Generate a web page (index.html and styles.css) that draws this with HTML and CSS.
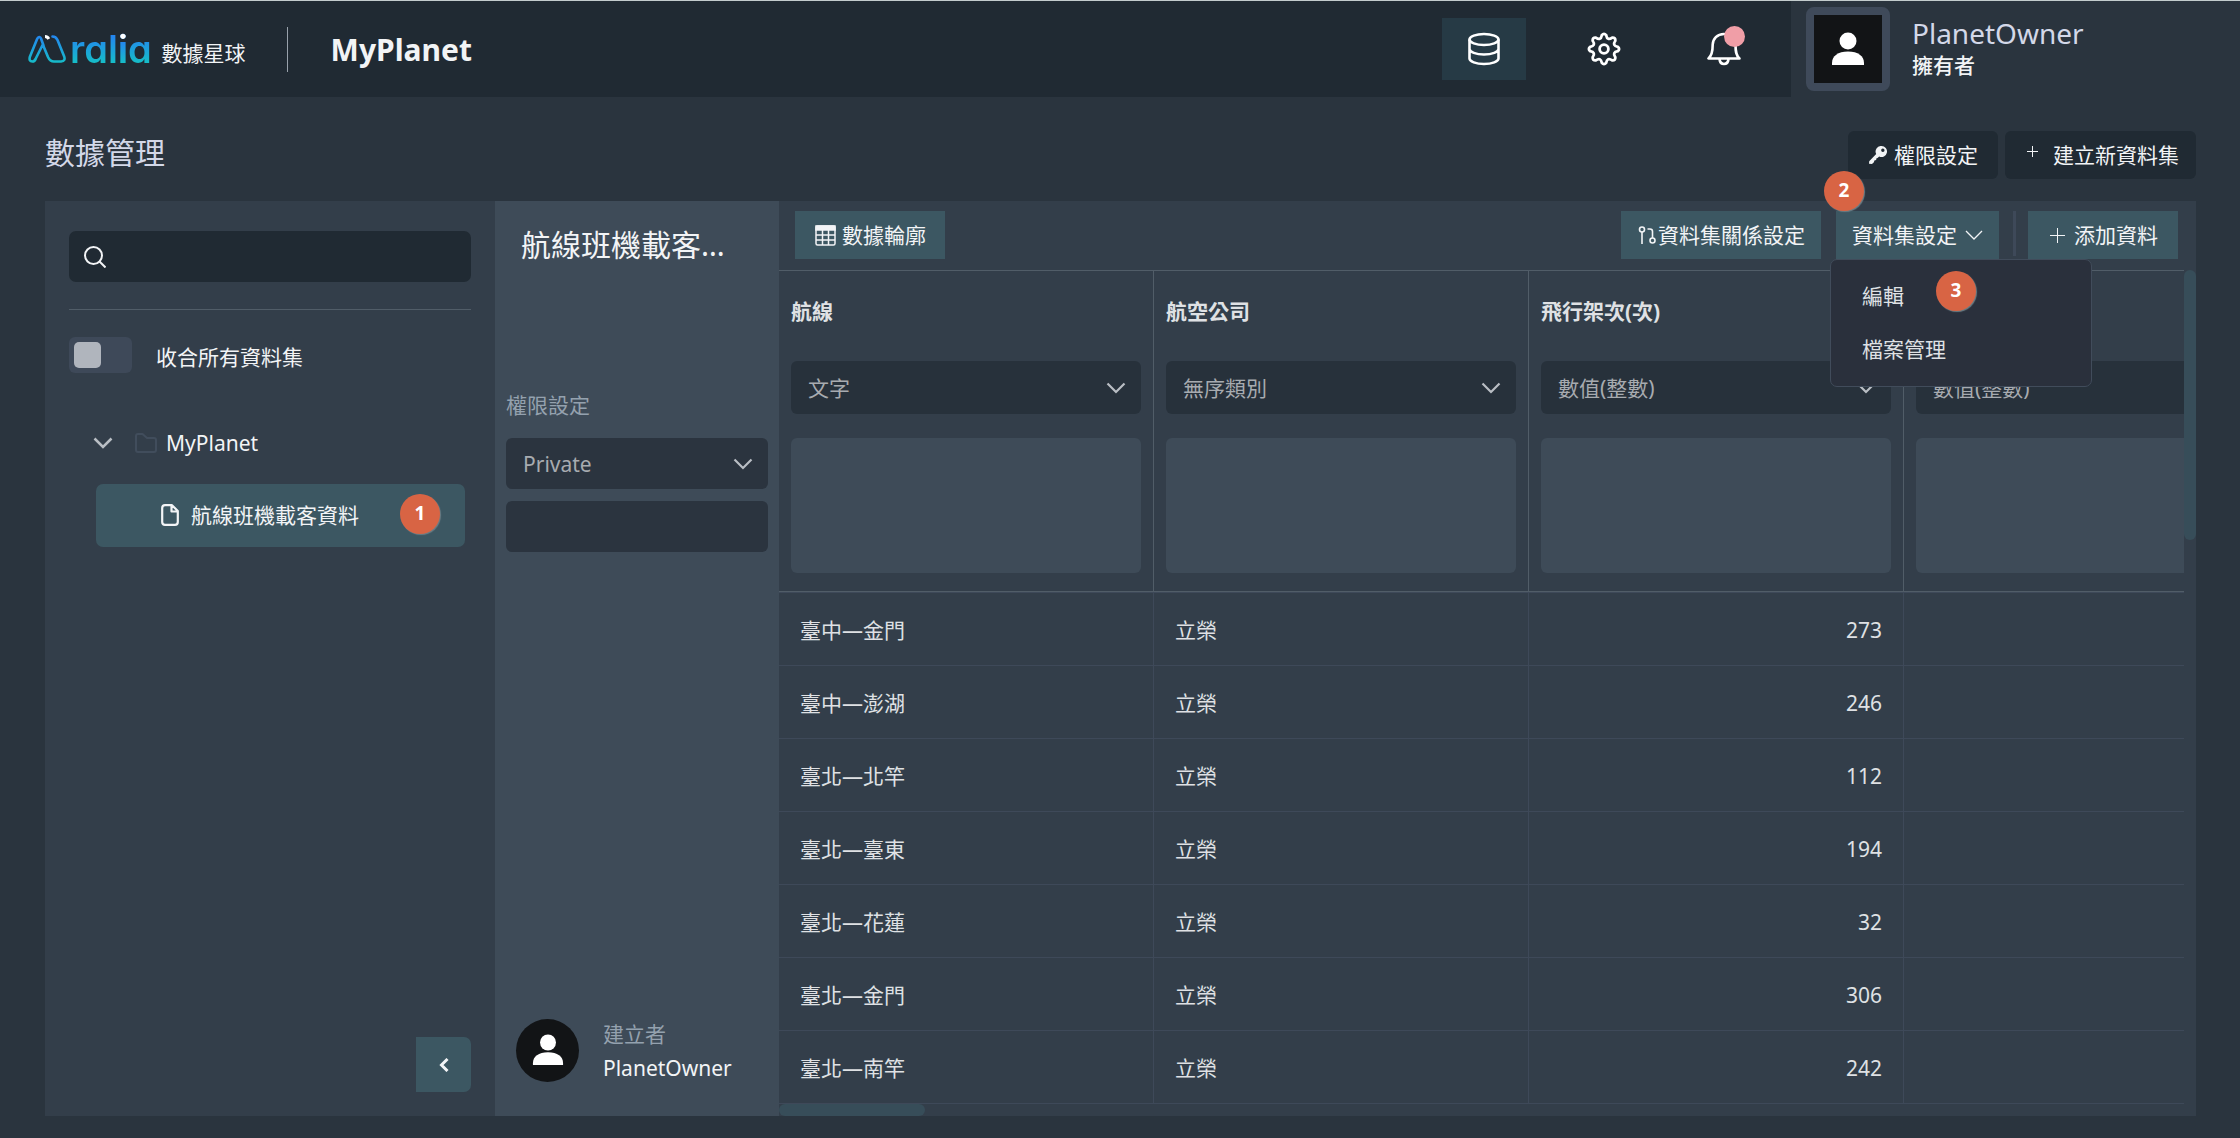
FILE: index.html
```html
<!DOCTYPE html>
<html lang="zh-Hant">
<head>
<meta charset="utf-8">
<meta name="viewport" content="width=device-width, initial-scale=1">
<title>Aralia 數據星球 - 數據管理</title>
<link rel="stylesheet" href="styles.css">
</head>
<body>
<header class="topbar">
  <a class="logo" href="#" aria-label="Aralia 數據星球">
    <svg class="logo-mark" viewBox="0 0 38 28" width="38" height="28" fill="none" stroke-width="2.600" stroke-linecap="round" stroke-linejoin="round" aria-hidden="true">
      <defs><linearGradient id="brand" gradientUnits="userSpaceOnUse" x1="0" y1="0" x2="0" y2="28"><stop offset="0" stop-color="#2485f0"/><stop offset="1" stop-color="#16bcc8"/></linearGradient></defs>
      <path stroke="url(#brand)" d="M15.500 10.500 13 3.500Q12 1.300 10.200 2.500 9.500 3 9 4.300L1.800 22Q.8 26.500 4.300 26.500 6.800 26.500 7.800 23.500L14.800 9.500 20 22Q22 26.500 26 26.500H33Q38 26 36 21L29.500 5Q28 1.500 24.500 1.500"/>
      <path stroke="#fff" stroke-width="3" stroke-linecap="butt" d="M17 1.500Q19.500 1.500 20.800 4"/>
    </svg>
    <span class="logo-word">ral<span class="logo-i">i</span>a</span>
    <span class="logo-sub">數據星球</span>
  </a>
  <h1 class="planet">MyPlanet</h1>
  <nav class="tools">
    <button class="tool active" type="button" aria-label="數據管理">
      <svg class="icon-lg" viewBox="0 0 34 34" fill="none" stroke="currentColor" stroke-width="2.600"><ellipse cx="17" cy="7.500" rx="14.500" ry="5.500"/><path d="M2.500 7.500v19c0 3 6.500 5.500 14.500 5.500s14.500-2.500 14.500-5.500v-19M2.500 17c0 3 6.500 5.500 14.500 5.500S31.500 20 31.500 17"/></svg>
    </button>
    <button class="tool" type="button" aria-label="設定">
      <svg class="icon-lg" viewBox="-17 -17 34 34" fill="none" stroke="currentColor" stroke-width="2.800" stroke-linejoin="round"><circle r="4.400"/><path d="M13.830-2.190Q16.400 0 13.830 2.190 7.850 3.250 11.330 8.230 11.600 11.600 8.230 11.330 3.250 7.850 2.190 13.830 0 16.400-2.190 13.830-3.250 7.850-8.230 11.330-11.600 11.600-11.330 8.230-7.850 3.250-13.830 2.190-16.400 0-13.830-2.190-7.850-3.250-11.330-8.230-11.600-11.600-8.230-11.330-3.250-7.850-2.190-13.830 0-16.400 2.190-13.830 3.250-7.850 8.230-11.330 11.600-11.600 11.330-8.230 7.850-3.250 13.830-2.190Z"/></svg>
    </button>
    <button class="tool" type="button" aria-label="通知">
      <svg class="icon-lg" viewBox="0 0 34 34" fill="none" stroke="currentColor" stroke-width="2.600" stroke-linecap="round" stroke-linejoin="round"><path d="M1.500 26.500h31c-3.500-3-4-7-4-14A11.500 11.500 0 0 0 17 2C10 2 6 7 5.700 12.500c0 7-.7 11-4.200 14zM12.500 27c.3 3 2 5 4.500 5s4.200-2 4.500-5"/></svg>
      <span class="dot"></span>
    </button>
  </nav>
  <div class="account">
    <span class="account-avatar"><svg viewBox="0 0 34 34" width="34" height="34" fill="#fff"><circle cx="17" cy="9" r="8.500"/><path d="M1 33v-2c0-7 6-11.500 16-11.500S33 24 33 31v2z"/></svg></span>
    <div class="account-text"><span class="account-name">PlanetOwner</span><span class="account-role">擁有者</span></div>
  </div>
</header>

<div class="titlebar">
  <h2 class="page-title">數據管理</h2>
  <div class="title-actions">
    <button class="btn-dark" type="button"><svg class="key" viewBox="0 0 18 18" width="18" height="18"><path fill="currentColor" fill-rule="evenodd" d="M12.500 0a5.500 5.500 0 1 1-2.300 10.500L8.500 12l-1 .3-.4 1.700-1.700.4-.5 1.800L3 18 0 17.800l.2-2.500L7.200 8A5.500 5.500 0 0 1 12.500 0zm1.300 2.500a1.700 1.700 0 1 0 .1 3.400 1.700 1.700 0 0 0-.1-3.400z"/></svg>權限設定</button>
    <button class="btn-dark btn-new" type="button"><svg class="plus-sm" viewBox="0 0 11 11" width="11" height="11" stroke="currentColor" stroke-width="1"><path d="M5.500 0v11M0 5.500h11"/></svg>建立新資料集</button>
  </div>
</div>

<main class="panel">
  <aside class="sidebar">
    <label class="search">
      <svg viewBox="0 0 22 22" width="22" height="22" fill="none" stroke="currentColor" stroke-width="2"><circle cx="9.500" cy="9.500" r="8.500"/><path d="m15.500 15.500 6 6"/></svg>
      <input type="search" aria-label="搜尋">
    </label>
    <label class="collapse-all"><input class="switch" type="checkbox" role="switch"><span class="switch-text">收合所有資料集</span></label>
    <div class="tree">
      <button class="tree-parent" type="button">
        <svg class="chev" viewBox="0 0 20 12" width="20" height="12" fill="none" stroke="#b9bec4" stroke-width="2.500"><path d="m1.500 1.500 8.500 8.500 8.500-8.500"/></svg>
        <svg class="folder" viewBox="0 0 22 20" width="22" height="20" fill="none" stroke="#414d5c" stroke-width="2" stroke-linejoin="round"><path d="M3 1h4.500L12 5h7q2 0 2 2v10q0 2-2 2H3q-2 0-2-2V3q0-2 2-2z"/></svg>
        MyPlanet</button>
      <a class="tree-item" href="#">
        <svg viewBox="0 0 18 22" width="18" height="22" fill="none" stroke="currentColor" stroke-width="2.200" stroke-linejoin="round"><path d="M4 1.200h7L16.800 7v11q0 2.800-2.800 2.800H4q-2.800 0-2.800-2.800V4Q1.200 1.200 4 1.200zM10.500 1.500V7.500h6"/></svg>
        航線班機載客資料
        <span class="badge badge-item">1</span></a>
    </div>
    <button class="collapse" type="button" aria-label="收合側欄"><svg viewBox="0 0 10 14" width="10" height="14" fill="none" stroke="currentColor" stroke-width="3"><path d="M8.500 1 2.500 7l6 6"/></svg></button>
  </aside>

  <section class="meta">
    <h3 class="meta-title">航線班機載客資料</h3>
    <label class="meta-label" for="perm">權限設定</label>
    <select class="select meta-field" id="perm"><option>Private</option></select>
    <input class="meta-field meta-input" type="text" aria-label="權限成員">
    <div class="creator">
      <span class="creator-avatar"><svg viewBox="0 0 34 34" width="32" height="34" fill="#fff"><circle cx="17" cy="9" r="8.500"/><path d="M1 33v-2c0-7 6-11.500 16-11.500S33 24 33 31v2z"/></svg></span>
      <div class="creator-text"><span class="creator-label">建立者</span><span>PlanetOwner</span></div>
    </div>
  </section>

  <section class="data">
    <div class="toolbar">
      <button class="btn-teal btn-profile" type="button"><svg viewBox="0 0 21 21" width="21" height="21" fill="none" stroke="currentColor" stroke-width="1.500"><rect x="1" y="1" width="19" height="19" rx="1.500"/><path fill="currentColor" d="M1 1h19v4H1z"/><path d="M1 10h19M1 15h19M7.500 5v15M13.500 5v15"/></svg>數據輪廓</button>
      <div class="toolbar-right">
        <button class="btn-teal btn-relation" type="button"><svg viewBox="0 0 18 18" width="18" height="18" fill="none" stroke="currentColor" stroke-width="1.600"><circle cx="4" cy="3.500" r="2.500"/><path d="M4 6v12M9.500 3H12q2.500 0 2.500 2.500V12"/><circle cx="14.500" cy="14.500" r="2.500"/></svg>資料集關係設定</button>
        <div class="menu-wrap">
          <button class="btn-teal btn-settings" type="button" aria-expanded="true">資料集設定<svg viewBox="0 0 18 10" width="18" height="10" fill="none" stroke="currentColor" stroke-width="1.300"><path d="m1 1 8 8 8-8"/></svg></button>
          <div class="menu">
            <button class="menu-item" type="button">編輯</button>
            <button class="menu-item" type="button">檔案管理</button>
            <span class="badge badge-edit">3</span>
          </div>
          <span class="badge badge-settings">2</span>
        </div>
        <span class="divider"></span>
        <button class="btn-teal btn-add" type="button"><svg viewBox="0 0 15 15" width="15" height="15" stroke="currentColor" stroke-width="1"><path d="M7.500 0v15M0 7.500h15"/></svg>添加資料</button>
      </div>
    </div>
    <div class="grid-area">
      <div class="grid-view">
        <table class="grid">
          <thead>
            <tr>
              <th><div class="col-name">航線</div><select class="select" aria-label="航線 類型"><option>文字</option></select><div class="col-chart"></div></th>
              <th><div class="col-name">航空公司</div><select class="select" aria-label="航空公司 類型"><option>無序類別</option></select><div class="col-chart"></div></th>
              <th><div class="col-name">飛行架次(次)</div><select class="select" aria-label="飛行架次 類型"><option>數值(整數)</option></select><div class="col-chart"></div></th>
              <th><div class="col-name"></div><select class="select" aria-label="類型"><option>數值(整數)</option></select><div class="col-chart"></div></th>
            </tr>
          </thead>
          <tbody>
            <tr><td>臺中—金門</td><td>立榮</td><td class="num">273</td><td></td></tr>
            <tr><td>臺中—澎湖</td><td>立榮</td><td class="num">246</td><td></td></tr>
            <tr><td>臺北—北竿</td><td>立榮</td><td class="num">112</td><td></td></tr>
            <tr><td>臺北—臺東</td><td>立榮</td><td class="num">194</td><td></td></tr>
            <tr><td>臺北—花蓮</td><td>立榮</td><td class="num">32</td><td></td></tr>
            <tr><td>臺北—金門</td><td>立榮</td><td class="num">306</td><td></td></tr>
            <tr><td>臺北—南竿</td><td>立榮</td><td class="num">242</td><td></td></tr>
          </tbody>
        </table>
      </div>
      <div class="scroll-y"></div>
      <div class="scroll-x"></div>
    </div>
  </section>
</main>
</body>
</html>
```
FILE: styles.css
```css
* { box-sizing: border-box; }

body {
  margin: 0;
  min-height: 100vh;
  display: flex;
  flex-direction: column;
  background: #2a343e;
  color: #f2f4f6;
  font-family: "Noto Sans", "Noto Sans CJK TC", sans-serif;
  font-size: 21px;
  line-height: 30px;
  overflow-x: hidden;
}

button, input, select { font: inherit; color: inherit; border: 0; margin: 0; }
button { background: none; padding: 0; cursor: pointer; }
a { color: inherit; text-decoration: none; }
h1, h2, h3 { margin: 0; }
svg { display: block; flex: none; }

/* top bar */
.topbar {
  display: flex;
  height: 97px;
  border-top: 1px solid #c3cccd;
  background: #202a33;
}
.logo {
  display: flex;
  align-items: center;
  align-self: center;
  padding-left: 28px;
  padding-right: 41px;
  height: 45px;
  border-right: 1px solid #98a1ab;
}
.logo-word {
  margin-left: 4px;
  font: 600 38px/44px Inter, sans-serif;
  font-feature-settings: "cv11";
  color: transparent;
  background: linear-gradient(#2485f0 20%, #16bcc8 80%);
  background-clip: text;
}
.logo-i {
  background: linear-gradient(#fff 34%, #2485f0 34%, #16bcc8 80%);
  background-clip: text;
}
.logo-sub { margin-left: 10px; padding-top: 7px; }
.planet { align-self: center; margin-left: 43px; padding-top: 2px; font-size: 30px; line-height: 44px; }
.tools { display: flex; align-items: center; gap: 36px; margin-left: auto; padding-right: 25px; }
.tool { position: relative; width: 84px; height: 62px; display: grid; place-items: center; color: #fff; }
.tool.active { background: #263a45; }
.icon-lg { width: 34px; height: 34px; }
.dot { position: absolute; top: 8px; right: 21px; width: 21px; height: 21px; border-radius: 50%; background: #f09ea7; }
.account { display: flex; align-items: center; width: 449px; padding-left: 15px; background: #2a343e; }
.account-avatar { display: grid; place-items: center; width: 84px; height: 84px; border: 8px solid #3f4a5a; border-radius: 8px; background: #121416; }
.account-text { display: flex; flex-direction: column; margin-left: 22px; padding-bottom: 2px; }
.account-name { font-size: 28px; line-height: 34px; color: #d3d8e8; }
.account-role { font-weight: 500; }

/* title row */
.titlebar { display: flex; justify-content: space-between; align-items: flex-start; padding: 34px 44px 22px 45px; }
.page-title { font-size: 30px; line-height: 44px; font-weight: 400; color: #d3d8e8; }
.title-actions { display: flex; gap: 7px; }
.btn-dark { display: flex; align-items: center; gap: 7px; height: 48px; padding: 0 20px 0 21px; border-radius: 6px; background: #202a33; }
.btn-new { gap: 15px; padding: 0 17px 0 22px; }
.plus-sm { margin-bottom: 8px; }

/* panel */
.panel { flex: 1; display: flex; margin: 0 44px 22px 45px; background: #333e4a; }
.sidebar { display: flex; flex-direction: column; width: 450px; padding: 30px 24px 24px; flex: none; }
.search { display: flex; align-items: center; gap: 12px; height: 51px; padding: 0 15px; border-radius: 7px; background: #202a33; }
.search input { flex: 1; min-width: 0; background: none; outline: 0; appearance: none; }
.collapse-all { display: flex; align-items: center; gap: 24px; margin-top: 27px; padding-top: 27px; border-top: 1px solid #515d68; }
.switch { appearance: none; display: block; width: 63px; height: 36px; padding: 5px; border-radius: 6px; background: #3e4959; }
.switch::before { content: ""; display: block; width: 27px; height: 26px; border-radius: 5px; background: #b0b5bd; }
.switch-text { padding-top: 3px; }
.tree { margin-top: 54px; }
.tree-parent { display: flex; align-items: center; height: 32px; padding-left: 24px; }
.folder { margin: 0 9px 0 22px; }
.tree-item { position: relative; display: flex; align-items: center; gap: 12px; height: 63px; margin: 25px 6px 0 27px; padding: 0 0 2px 65px; border-radius: 7px; background: #3c5762; }
.badge { position: absolute; width: 40px; height: 40px; border-radius: 50%; background: #d86444; box-shadow: 1px 1px 1px #6d7f86; color: #fff; font-weight: 700; font-size: 19px; line-height: 38px; text-align: center; }
.badge-item { top: 10px; right: 25px; }
.collapse { display: grid; place-items: center; align-self: flex-end; width: 55px; height: 55px; margin-top: auto; border-radius: 0 7px 7px 0; background: #3c5762; }

/* dataset summary */
.meta { display: flex; flex-direction: column; width: 284px; padding: 22px 11px 33px; flex: none; background: #3e4b58; }
.meta-title { margin: 0 32px 0 15px; font-size: 30px; line-height: 44px; font-weight: 400; white-space: nowrap; overflow: hidden; text-overflow: ellipsis; }
.meta-label { margin-top: 123px; color: #94a1ae; }
.meta-field { height: 51px; margin-top: 18px; border-radius: 6px; background-color: #2b343f; }
.meta-input { margin-top: 12px; padding: 0 17px; }
.select {
  appearance: none;
  width: 100%;
  padding: 0 17px;
  border-radius: 6px;
  color: #a7abb0;
  background: #27313b url("data:image/svg+xml,%3Csvg xmlns='http://www.w3.org/2000/svg' width='20' height='12' fill='none' stroke='%23b9bec4' stroke-width='2.200'%3E%3Cpath d='m1.500 1.500 8.500 8.500 8.500-8.500'/%3E%3C/svg%3E") no-repeat right 15px center;
}
.select.meta-field { background-color: #2b343f; }
.creator { display: flex; align-items: center; gap: 24px; margin-top: auto; padding-left: 10px; }
.creator-avatar { display: grid; place-items: center; width: 63px; height: 63px; border-radius: 50%; background: #121416; }
.creator-text { display: flex; flex-direction: column; gap: 4px; padding-top: 2px; }
.creator-label { color: #94a1ae; }

/* data area */
.data { flex: 1; min-width: 0; display: flex; flex-direction: column; }
.toolbar { display: flex; justify-content: space-between; padding: 10px 18px 11px 16px; }
.toolbar-right { display: flex; }
.btn-teal { display: flex; align-items: center; height: 48px; background: #3c5762; white-space: nowrap; }
.btn-profile { gap: 6px; padding: 0 19px 0 20px; }
.btn-relation { gap: 2px; padding: 0 16px 0 17px; }
.btn-settings { gap: 8px; padding: 0 16px; }
.btn-add { gap: 9px; padding: 0 20px 0 22px; }
.divider { width: 3px; height: 45px; margin: 0 12px 0 14px; background: #3e4959; }
.menu-wrap { position: relative; margin-left: 15px; z-index: 2; }
.menu { position: absolute; top: 48px; left: -6px; width: 262px; padding: 9px 0 11px; border: 1px solid #414c5b; border-radius: 7px; background: #2a303c; }
.menu-item { display: block; width: 100%; height: 53px; padding: 0 31px; text-align: left; color: #dfe1e4; }
.badge-edit { top: 11px; left: 105px; }
.badge-settings { top: -40px; left: -12px; }

.grid-area { position: relative; flex: 1; padding: 0 12px 11px 0; }
.grid-view { overflow: hidden; border-top: 1px solid #515d68; }
.grid { table-layout: fixed; width: 1500px; border-collapse: separate; border-spacing: 0; color: #dfe1e4; }
.grid th { padding: 25px 12px 18px; border-right: 1px solid #515d68; border-bottom: 1px solid #515d68; text-align: left; }
.col-name { height: 30px; margin-bottom: 35px; }
.grid .select { display: block; height: 53px; margin-bottom: 24px; font-weight: 400; }
.col-chart { height: 135px; border-radius: 6px; background: #3e4b58; }
.grid td { height: 73px; padding: 1px 21px 0; border-right: 1px solid #3e4959; border-bottom: 1px solid #3e4959; }
.grid tbody tr:first-child td { height: 74px; border-top: 1px solid #3e4959; }
.grid .num { text-align: right; }
.scroll-y { position: absolute; top: 0; right: 0; width: 12px; height: 270px; border-radius: 6px; background: #374d59; }
.scroll-x { position: absolute; left: 0; bottom: 0; width: 146px; height: 12px; border-radius: 6px; background: #374d59; }
```
